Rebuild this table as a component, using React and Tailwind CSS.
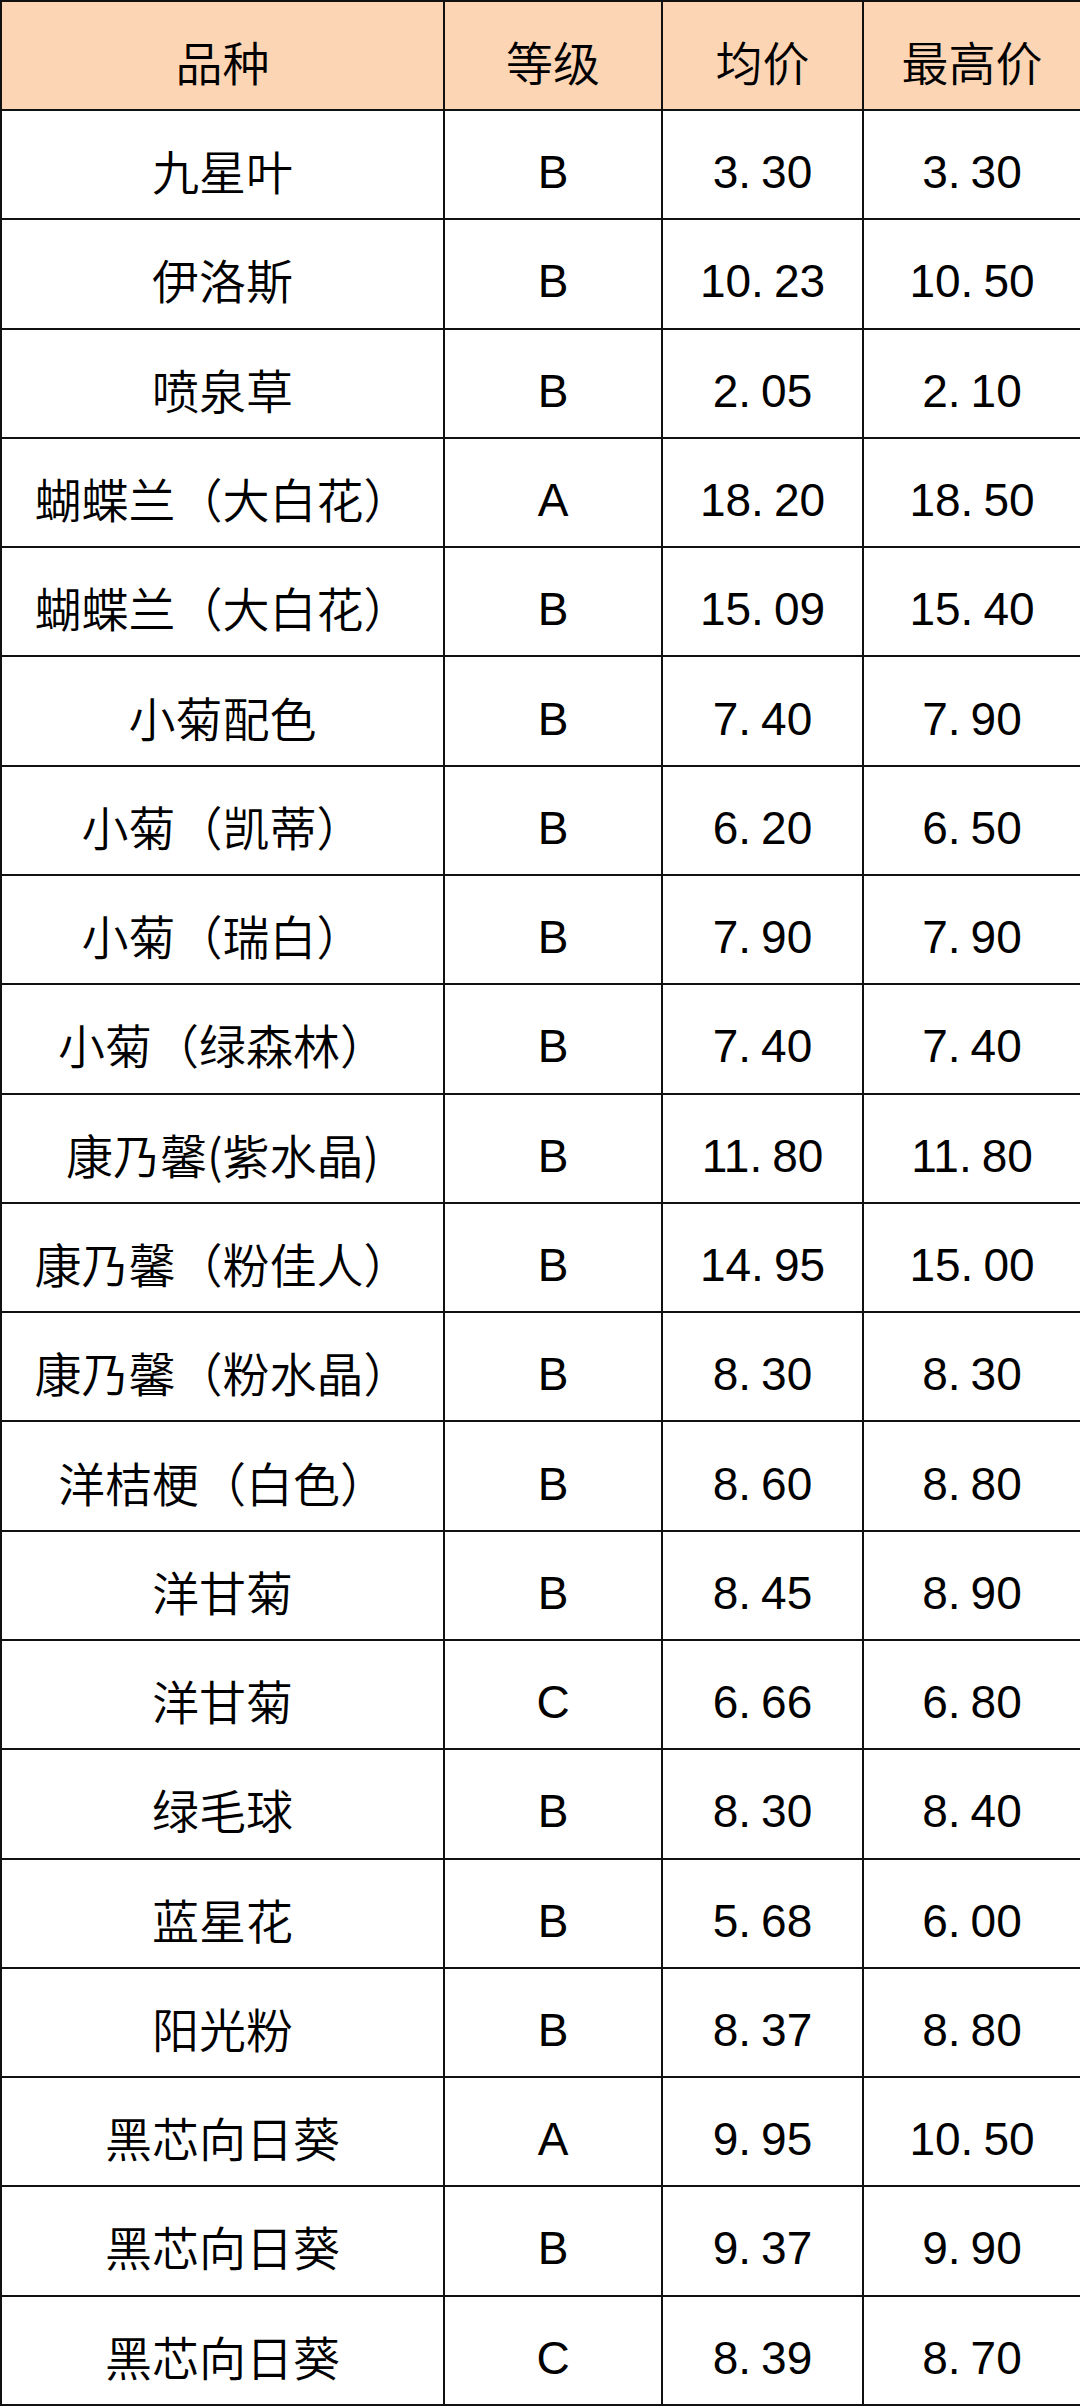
const rows = [
  ["九星叶", "B", "3.30", "3.30"],
  ["伊洛斯", "B", "10.23", "10.50"],
  ["喷泉草", "B", "2.05", "2.10"],
  ["蝴蝶兰（大白花）", "A", "18.20", "18.50"],
  ["蝴蝶兰（大白花）", "B", "15.09", "15.40"],
  ["小菊配色", "B", "7.40", "7.90"],
  ["小菊（凯蒂）", "B", "6.20", "6.50"],
  ["小菊（瑞白）", "B", "7.90", "7.90"],
  ["小菊（绿森林）", "B", "7.40", "7.40"],
  ["康乃馨(紫水晶)", "B", "11.80", "11.80"],
  ["康乃馨（粉佳人）", "B", "14.95", "15.00"],
  ["康乃馨（粉水晶）", "B", "8.30", "8.30"],
  ["洋桔梗（白色）", "B", "8.60", "8.80"],
  ["洋甘菊", "B", "8.45", "8.90"],
  ["洋甘菊", "C", "6.66", "6.80"],
  ["绿毛球", "B", "8.30", "8.40"],
  ["蓝星花", "B", "5.68", "6.00"],
  ["阳光粉", "B", "8.37", "8.80"],
  ["黑芯向日葵", "A", "9.95", "10.50"],
  ["黑芯向日葵", "B", "9.37", "9.90"],
  ["黑芯向日葵", "C", "8.39", "8.70"],
];

const cell = "border-2 border-[#111] text-center align-middle px-0 pt-[10px] pb-0 font-[350]";

const Num = ({ value }) => {
  const [a, b] = value.split(".");
  return (
    <span className="font-['Liberation_Sans',Arial,sans-serif] text-[46px] leading-none font-normal">
      {a}
      {b !== undefined && (
        <>
          <span className="mr-[10px]">.</span>
          {b}
        </>
      )}
    </span>
  );
};

export default function App() {
  return (
    <div className="w-[1080px] h-[2406px] bg-white text-black font-['Noto_Sans_CJK_SC',sans-serif]">
      <table className="w-full h-full table-fixed border-collapse">
        <colgroup>
          <col className="w-[443px]" />
          <col className="w-[218px]" />
          <col className="w-[201px]" />
          <col className="w-[218px]" />
        </colgroup>
        <thead>
          <tr className="h-[109px] bg-[#fcd5b4] text-[47px] leading-none">
            <th className={cell}>品种</th>
            <th className={cell}>等级</th>
            <th className={cell}>均价</th>
            <th className={cell}>最高价</th>
          </tr>
        </thead>
        <tbody>
          {rows.map((r, i) => (
            <tr key={i} className="h-[109px] text-[47px] leading-none">
              <td className={cell}>{r[0]}</td>
              <td className={cell}>
                <Num value={r[1]} />
              </td>
              <td className={cell}>
                <Num value={r[2]} />
              </td>
              <td className={cell}>
                <Num value={r[3]} />
              </td>
            </tr>
          ))}
        </tbody>
      </table>
    </div>
  );
}
